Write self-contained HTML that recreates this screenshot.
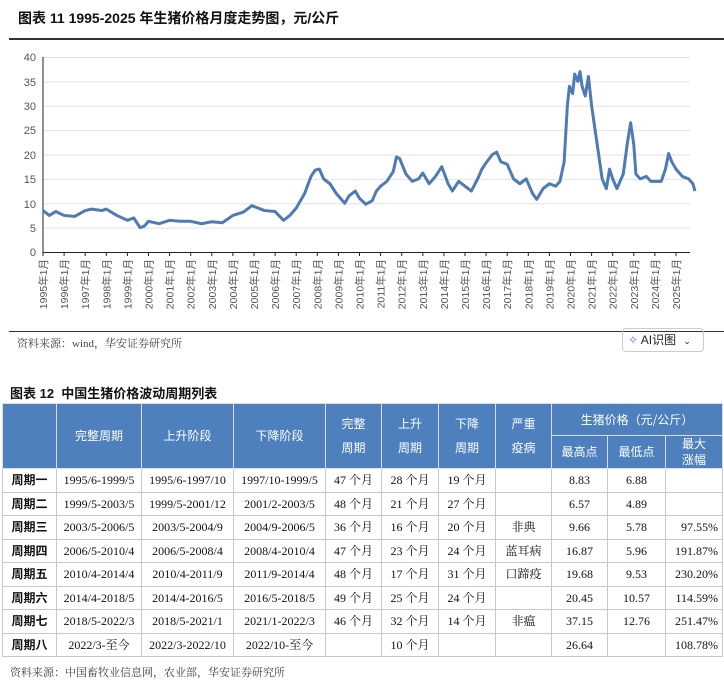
<!DOCTYPE html><html><head><meta charset="utf-8"><style>
body{margin:0;width:724px;height:682px;background:#fff;font-family:"Liberation Sans","Noto Sans CJK SC",sans-serif;position:relative;overflow:hidden}
.abs{position:absolute}
table{border-collapse:collapse;position:absolute;left:2px;top:403px;width:720px;table-layout:fixed;font-family:"Liberation Serif","Noto Serif CJK SC",serif;font-size:12px}
td{border:1px solid #c8c8c8;text-align:center;height:22.5px;padding:0;color:#111;line-height:16px}
thead td{background:#4e80bd;color:#fff;border-color:#ddd;font-family:"Noto Sans CJK SC",sans-serif;font-size:12px;line-height:26px}
tbody td:first-child{font-weight:bold;font-family:"Noto Sans CJK SC",sans-serif}
</style></head><body>
<div class="abs" style="left:18px;top:8px;font-size:14px;font-weight:bold;color:#111">图表 11 1995-2025 年生猪价格月度走势图，元/公斤</div>
<div class="abs" style="left:9px;top:38px;width:715px;height:1.5px;background:#333"></div>
<svg class="abs" style="left:0;top:0" width="724" height="330">
<g stroke="#e3e3e3" stroke-width="1">
<line x1="43" x2="690" y1="57.5" y2="57.5"/><line x1="43" x2="690" y1="81.9" y2="81.9"/><line x1="43" x2="690" y1="106.3" y2="106.3"/><line x1="43" x2="690" y1="130.6" y2="130.6"/><line x1="43" x2="690" y1="155" y2="155"/><line x1="43" x2="690" y1="179.4" y2="179.4"/><line x1="43" x2="690" y1="203.8" y2="203.8"/><line x1="43" x2="690" y1="228.1" y2="228.1"/></g>
<line x1="43" x2="43" y1="57" y2="252" stroke="#222"/>
<line x1="43" x2="690" y1="252.5" y2="252.5" stroke="#222"/>
<g font-size="11" fill="#555" text-anchor="end" font-family="Liberation Sans">
<text x="36" y="61">40</text><text x="36" y="86">35</text><text x="36" y="110">30</text><text x="36" y="134">25</text><text x="36" y="159">20</text><text x="36" y="183">15</text><text x="36" y="208">10</text><text x="36" y="232">5</text><text x="36" y="256">0</text></g>
<g id="ticks" stroke="#222"></g>
<g id="xl" font-size="10.5" fill="#555" font-family="Liberation Sans,Noto Sans CJK SC"></g>
<polyline transform="translate(43,252) scale(21.1,-4.875)" vector-effect="non-scaling-stroke" fill="none" stroke="#4e7bb5" stroke-width="3" stroke-linejoin="round" points="0,8.5 0.3,7.5 0.6,8.3 1,7.5 1.5,7.3 2,8.5 2.3,8.8 2.8,8.5 3,8.8 3.5,7.5 4,6.5 4.3,7 4.6,5 4.8,5.3 5,6.3 5.5,5.8 6,6.5 6.5,6.3 7,6.3 7.5,5.8 8,6.2 8.5,6 9,7.5 9.5,8.2 9.9,9.5 10.5,8.5 11,8.3 11.4,6.5 11.7,7.5 12,9 12.4,12 12.7,15.5 12.9,16.8 13.1,17 13.3,15 13.6,14 13.9,12 14.3,10 14.5,11.5 14.8,12.5 15,11 15.3,9.8 15.6,10.5 15.8,12.5 16,13.5 16.3,14.5 16.6,16.5 16.75,19.5 16.9,19.2 17.2,16 17.5,14.5 17.8,15 18,16.2 18.3,14 18.6,15.5 18.9,17.5 19.2,14 19.4,12.5 19.7,14.5 20,13.5 20.3,12.5 20.6,15 20.8,17 21,18.3 21.3,20 21.5,20.5 21.7,18.5 22,18 22.3,15 22.6,14 22.9,15 23.2,12 23.4,10.8 23.7,13 24,14 24.3,13.5 24.5,14.5 24.7,18.5 24.85,30 24.95,34 25.1,32.5 25.2,36.5 25.35,35 25.45,37 25.55,34 25.7,32 25.85,36 26,30 26.2,24 26.4,18 26.5,15 26.7,13 26.85,17 27,15 27.2,13 27.5,16 27.7,22.5 27.85,26.5 28,22 28.1,16 28.3,15 28.6,15.5 28.8,14.5 29,14.5 29.3,14.5 29.5,17 29.65,20.2 29.8,18.5 30,17 30.3,15.5 30.6,15 30.8,14 30.9,12.5"/>
</svg>
<script>
var t='',l='';for(var i=0;i<=30;i++){var x=43+i*21.1;t+='<line x1="'+x+'" x2="'+x+'" y1="252" y2="256"/>';l+='<text transform="translate('+(x+4)+',259) rotate(-90)" text-anchor="end">'+(1995+i)+'年1月</text>';}
document.getElementById('ticks').innerHTML=t;document.getElementById('xl').innerHTML=l;
</script>
<div class="abs" style="left:9px;top:331px;width:715px;height:1px;background:#333"></div>
<div class="abs" style="left:17px;top:335px;font-size:11px;color:#444;font-family:'Liberation Serif','Noto Serif CJK SC',serif">资料来源：wind，华安证券研究所</div>
<div class="abs" style="left:622px;top:328px;width:80px;height:22px;border:1px solid #ccc;border-radius:4px;font-size:12px;line-height:22px;color:#222"><span style="color:#8a5cf0;margin-left:5px">✧</span> AI识图 <span style="font-size:9px;margin-left:4px">⌄</span></div>
<div class="abs" style="left:10px;top:383px;font-size:13px;font-weight:bold;color:#111;font-family:'Liberation Sans','Noto Sans CJK SC',sans-serif">图表 12 &nbsp;中国生猪价格波动周期列表</div>
<table>
<colgroup><col style="width:54px"><col style="width:85px"><col style="width:92px"><col style="width:92px"><col style="width:56px"><col style="width:57px"><col style="width:57px"><col style="width:56px"><col style="width:56px"><col style="width:58px"><col style="width:57px"></colgroup>
<thead><tr><td rowspan="2"></td><td rowspan="2">完整周期</td><td rowspan="2">上升阶段</td><td rowspan="2">下降阶段</td><td rowspan="2" style="line-height:24px">完整<br>周期</td><td rowspan="2" style="line-height:24px">上升<br>周期</td><td rowspan="2" style="line-height:24px">下降<br>周期</td><td rowspan="2" style="line-height:24px">严重<br>疫病</td><td colspan="3" style="height:31px;line-height:20px">生猪价格（元/公斤）</td></tr>
<tr><td style="height:30px;line-height:20px">最高点</td><td style="line-height:20px">最低点</td><td style="line-height:16px">最大<br>涨幅</td></tr></thead>
<tbody>
<tr><td>周期一</td><td>1995/6-1999/5</td><td>1995/6-1997/10</td><td>1997/10-1999/5</td><td>47 个月</td><td>28 个月</td><td>19 个月</td><td></td><td>8.83</td><td>6.88</td><td></td></tr>
<tr><td>周期二</td><td>1999/5-2003/5</td><td>1999/5-2001/12</td><td>2001/2-2003/5</td><td>48 个月</td><td>21 个月</td><td>27 个月</td><td></td><td>6.57</td><td>4.89</td><td></td></tr>
<tr><td>周期三</td><td>2003/5-2006/5</td><td>2003/5-2004/9</td><td>2004/9-2006/5</td><td>36 个月</td><td>16 个月</td><td>20 个月</td><td>非典</td><td>9.66</td><td>5.78</td><td style="text-align:right;padding-right:4px">97.55%</td></tr>
<tr><td>周期四</td><td>2006/5-2010/4</td><td>2006/5-2008/4</td><td>2008/4-2010/4</td><td>47 个月</td><td>23 个月</td><td>24 个月</td><td>蓝耳病</td><td>16.87</td><td>5.96</td><td style="text-align:right;padding-right:4px">191.87%</td></tr>
<tr><td>周期五</td><td>2010/4-2014/4</td><td>2010/4-2011/9</td><td>2011/9-2014/4</td><td>48 个月</td><td>17 个月</td><td>31 个月</td><td>口蹄疫</td><td>19.68</td><td>9.53</td><td style="text-align:right;padding-right:4px">230.20%</td></tr>
<tr><td>周期六</td><td>2014/4-2018/5</td><td>2014/4-2016/5</td><td>2016/5-2018/5</td><td>49 个月</td><td>25 个月</td><td>24 个月</td><td></td><td>20.45</td><td>10.57</td><td style="text-align:right;padding-right:4px">114.59%</td></tr>
<tr><td>周期七</td><td>2018/5-2022/3</td><td>2018/5-2021/1</td><td>2021/1-2022/3</td><td>46 个月</td><td>32 个月</td><td>14 个月</td><td>非瘟</td><td>37.15</td><td>12.76</td><td style="text-align:right;padding-right:4px">251.47%</td></tr>
<tr><td>周期八</td><td>2022/3-至今</td><td>2022/3-2022/10</td><td>2022/10-至今</td><td></td><td>10 个月</td><td></td><td></td><td>26.64</td><td></td><td style="text-align:right;padding-right:4px">108.78%</td></tr>
</tbody></table>
<div class="abs" style="left:10px;top:664px;font-size:11px;color:#444;font-family:'Liberation Serif','Noto Serif CJK SC',serif">资料来源：中国畜牧业信息网，农业部，华安证券研究所</div>
</body></html>
